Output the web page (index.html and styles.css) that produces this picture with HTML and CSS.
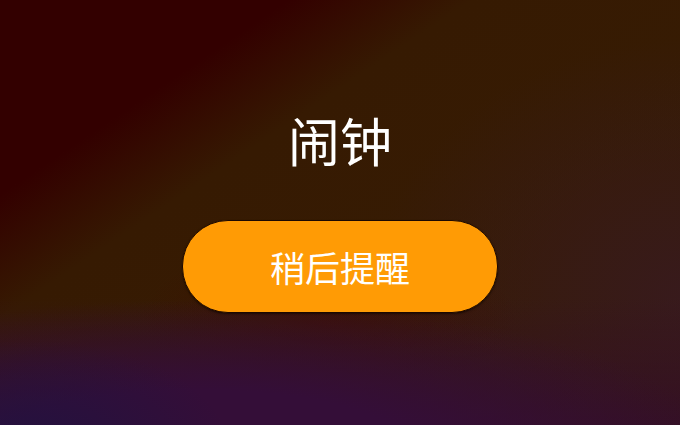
FILE: index.html
```html
<!DOCTYPE html>
<html lang="zh-CN">
<head>
<meta charset="utf-8">
<title>闹钟</title>
<link rel="stylesheet" href="styles.css">
</head>
<body>
<main class="screen">
  <h1 class="title">闹钟</h1>
  <button class="snooze" type="button">稍后提醒</button>
</main>
</body>
</html>
```

FILE: styles.css
```css
html, body {
  margin: 0;
  padding: 0;
  width: 100%;
  height: 100%;
}

body {
  font-family: "Noto Sans CJK SC", "Noto Sans", sans-serif;
  overflow: hidden;
}

.screen {
  width: 680px;
  height: 425px;
  box-sizing: border-box;
  display: flex;
  flex-direction: column;
  align-items: center;
  padding-top: 110px;
  background:
    radial-gradient(ellipse 200px 110px at 30px 450px, rgba(32, 18, 64, 0.9), rgba(32, 18, 64, 0) 100%),
    radial-gradient(ellipse 520px 150px at 200px 450px, rgba(52, 14, 56, 1) 40%, rgba(52, 14, 56, 0) 100%),
    linear-gradient(180deg, rgba(52, 14, 40, 0) 70%, rgba(52, 14, 40, 0.85) 100%),
    radial-gradient(ellipse 190px 80px at 330px 318px, rgba(62, 12, 4, 0.65), rgba(62, 12, 4, 0) 100%),
    radial-gradient(ellipse 320px 260px at 690px 300px, rgba(56, 26, 30, 0.95), rgba(56, 26, 30, 0) 100%),
    linear-gradient(146deg, #330000 0%, #330000 22%, #361a02 36%, #371d05 100%);
}

.title {
  margin: 0;
  font-size: 52px;
  line-height: 60px;
  font-weight: 400;
  color: #ffffff;
}

.snooze {
  margin-top: 50px;
  width: 316px;
  height: 93px;
  border: 1px solid #1c0800;
  border-radius: 46px;
  background: #ff9b05;
  color: #ffffff;
  font-family: "Noto Sans CJK SC", "Noto Sans", sans-serif;
  font-size: 35px;
  font-weight: 400;
  line-height: 1;
  padding: 0;
  box-shadow: 0 1px 2px rgba(0, 0, 0, 0.5);
}
```
